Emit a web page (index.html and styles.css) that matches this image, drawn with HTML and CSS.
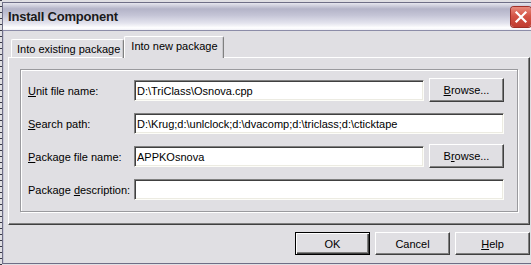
FILE: index.html
```html
<!DOCTYPE html>
<html lang="en">
<head>
    <meta charset="UTF-8">
    <title>Install Component</title>
    <link rel="stylesheet" href="styles.css">
</head>
<body>
    <div class="window">
        <div class="titlebar">
            <span class="title">Install Component</span>
            <span class="close">
                <svg width="20" height="20" viewBox="0 0 20 20">
                    <path d="M5.5 5.5 L14.5 14.5 M14.5 5.5 L5.5 14.5" stroke="#fff" stroke-width="2.2" stroke-linecap="square"/>
                </svg>
            </span>
        </div>
        <div class="dialog">
            <div class="tabs">
                <span class="tab">Into existing package</span>
                <span class="tab active">Into new package</span>
            </div>
            <div class="panel">
                <div class="group">
                    <div class="row">
                        <label class="label"><u>U</u>nit file name:</label>
                        <input class="field" type="text" value="D:\TriClass\Osnova.cpp">
                        <button class="btn"><u>B</u>rowse...</button>
                    </div>
                    <div class="row">
                        <label class="label"><u>S</u>earch path:</label>
                        <input class="field wide" type="text" value="D:\Krug;d:\unlclock;d:\dvacomp;d:\triclass;d:\cticktape">
                    </div>
                    <div class="row">
                        <label class="label"><u>P</u>ackage file name:</label>
                        <input class="field" type="text" value="APPKOsnova">
                        <button class="btn">B<u>r</u>owse...</button>
                    </div>
                    <div class="row">
                        <label class="label">Package <u>d</u>escription:</label>
                        <input class="field wide" type="text" value="">
                    </div>
                </div>
            </div>
            <div class="actions">
                <button class="btn default">OK</button>
                <button class="btn">Cancel</button>
                <button class="btn"><u>H</u>elp</button>
            </div>
        </div>
    </div>
</body>
</html>
```

FILE: styles.css
```css
body {
    margin: 0;
    padding: 0 0 0 2px;
    width: 531px;
    height: 265px;
    overflow: hidden;
    box-sizing: border-box;
    background: #e0dfe3;
    background-image: repeating-linear-gradient(180deg, #3a3a48 0 1px, #e0dfe3 1px 6px);
    background-size: 2px 100%;
    background-repeat: no-repeat;
    font-family: 'Liberation Sans', Arial, sans-serif;
    font-size: 11px;
    color: #000;
}

.window {
    width: 540px;
    height: 262px;
    margin-top: 2px;
    box-sizing: border-box;
    border: 1px solid #6e6e86;
    border-right: none;
    background: #e0dfe3;
    box-shadow: inset 1px 0 #c8c8d8;
    display: flex;
    flex-direction: column;
}

.titlebar {
    height: 27px;
    display: flex;
    align-items: center;
    padding-left: 5px;
    border-bottom: 1px solid #8c8ca8;
    background: linear-gradient(180deg, #e6e6ee 0%, #b4b4c8 22%, #c4c4d6 45%, #e4e4ee 75%, #ffffff 92%, #f0f0f6 100%);
}

.title {
    font-weight: bold;
    font-size: 13px;
    letter-spacing: -0.2px;
    color: #1a1a1a;
    flex: 1;
}

.close {
    width: 20px;
    height: 20px;
    margin-right: 11px;
    border-radius: 3px;
    background: linear-gradient(180deg, #e88a7c 0%, #d45446 45%, #c03c30 100%);
    box-shadow: 0 0 0 1px #a03028;
    display: flex;
}

.dialog {
    flex: 1;
    padding: 5px 0 0 5px;
    width: 522px;
}

.tabs {
    display: flex;
    align-items: flex-end;
    height: 21px;
    padding-left: 3px;
}

.tab {
    height: 18px;
    line-height: 18px;
    white-space: nowrap;
    padding: 0 3px 0 5px;
    border: 1px solid #fff;
    border-bottom: none;
    border-right-color: #808080;
    box-shadow: inset -1px 0 #c8c8cc;
    border-radius: 2px 2px 0 0;
    margin-bottom: -1px;
}

.tab.active {
    height: 21px;
    line-height: 19px;
    background: #e0dfe3;
    position: relative;
    z-index: 1;
    padding: 0 5px 0 6px;
}

.panel {
    height: 168px;
    box-sizing: border-box;
    border: 1px solid #fff;
    border-right-color: #404040;
    border-bottom-color: #404040;
    box-shadow: inset -1px -1px #808080;
    padding: 11px;
}

.group {
    height: 143px;
    box-sizing: border-box;
    border: 1px solid #9a9a9e;
    box-shadow: 1px 1px #fff, inset 1px 1px #fff;
    padding: 8px 8px 0 7px;
    display: flex;
    flex-direction: column;
    gap: 9px;
}

.row {
    display: grid;
    grid-template-columns: 101px 290px 75px;
    column-gap: 5px;
    align-items: center;
    height: 24px;
}

.label {
    padding-top: 1px;
    white-space: nowrap;
}

.field {
    height: 21px;
    box-sizing: border-box;
    border: 1px solid;
    border-color: #808080 #fdfdf8 #fdfdf8 #808080;
    box-shadow: inset 1px 1px #404040, inset -1px -1px #ecebe2;
    background: #fff;
    font-family: 'Liberation Sans', Arial, sans-serif;
    font-size: 11px;
    padding: 1px 0 0 2px;
    outline: none;
}

.field.wide {
    grid-column: 2 / 4;
}

.btn {
    width: 75px;
    height: 24px;
    box-sizing: border-box;
    background: #e0dfe3;
    border: 1px solid;
    border-color: #fff #404040 #404040 #fff;
    box-shadow: inset -1px -1px #808080;
    font-family: 'Liberation Sans', Arial, sans-serif;
    font-size: 11px;
    color: #000;
    padding: 0;
}

.actions {
    display: flex;
    justify-content: flex-end;
    gap: 5px;
    padding-top: 7px;
}

.actions .btn {
    height: 23px;
}

.btn.default {
    border: 1px solid #000;
    box-shadow: inset 1px 1px #fff, inset -1px -1px #404040, inset -2px -2px #808080;
}
```
